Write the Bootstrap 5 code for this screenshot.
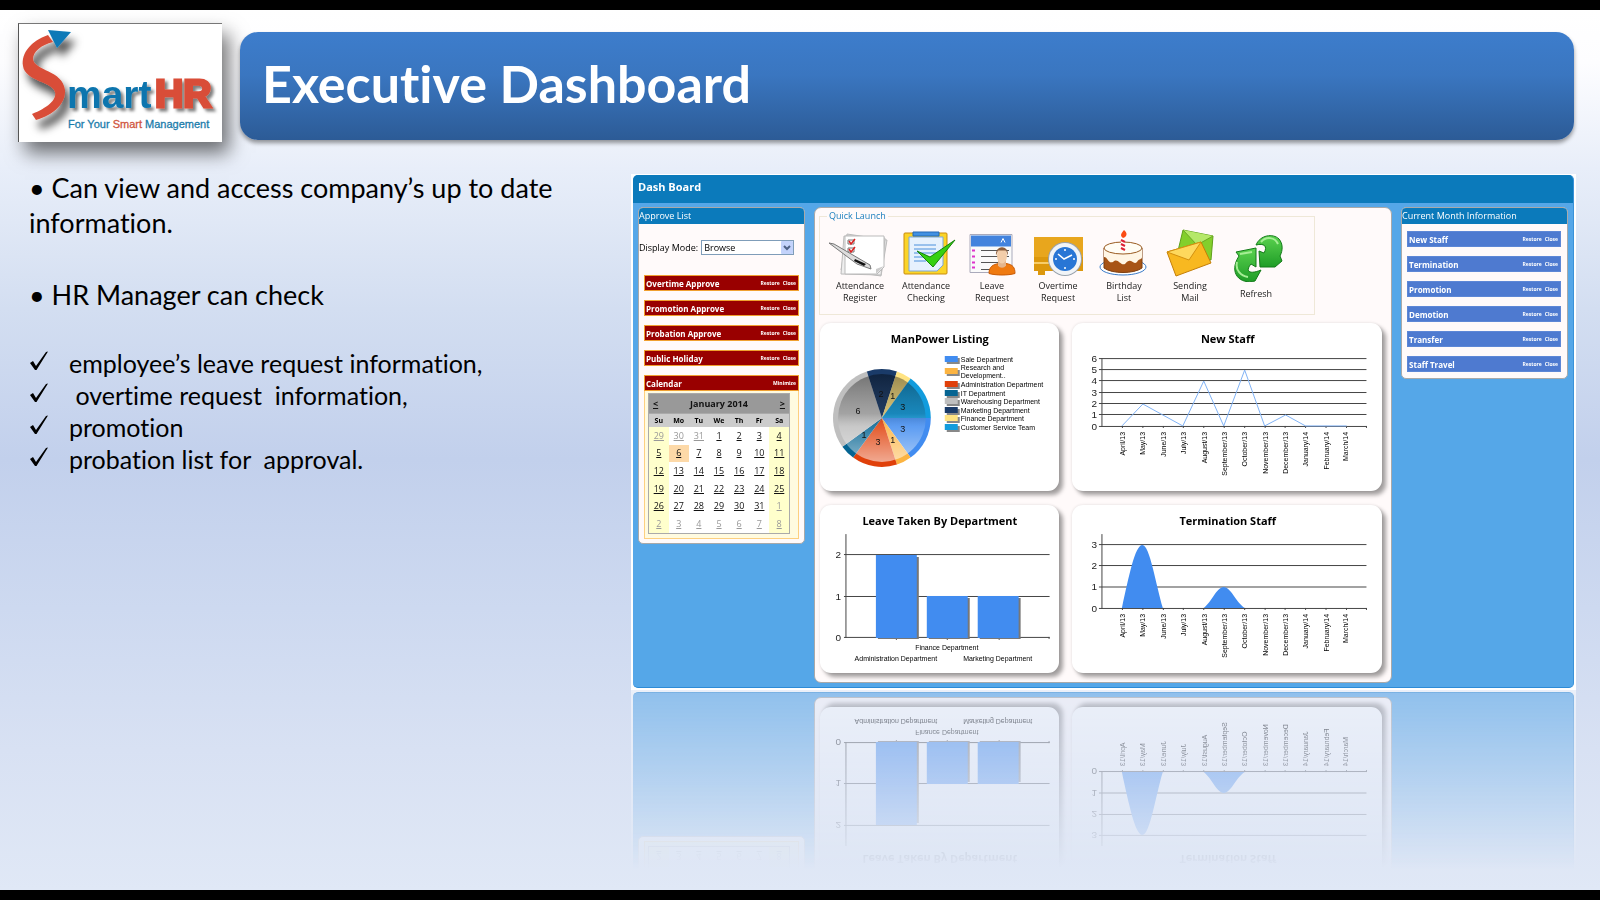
<!DOCTYPE html>
<html lang="en">
<head>
<meta charset="utf-8">
<meta name="viewport" content="width=device-width, initial-scale=1">
<title>SmartHR - Executive Dashboard</title>
<link rel="stylesheet" href="https://cdn.jsdelivr.net/npm/bootstrap@5.3.0/dist/css/bootstrap.min.css">
<style>
body{background:#000;font-family:"Open Sans","Noto Sans",sans-serif;color:#000}
.slide{min-height:100vh;border-top:10px solid #000;border-bottom:10px solid #000;overflow:hidden;
 background:linear-gradient(#fff 0,#fdfdff 6%,#e8eef9 18%,#d3def1 34%,#c2d0ec 51%,#cdd9f0 68%,#d8e1f3 84%,#e0e8f6 100%)}
.top-bar{padding:13px 26px 0 18px;gap:18px}
.logo-box{width:204px;height:119px;background:#fff;border-top:1px solid #777;border-left:1px solid #555;box-shadow:7px 11px 18px rgba(0,0,0,.55)}
.banner{height:108px;margin-top:9px;border-radius:18px;padding:0 22px;background:linear-gradient(#3d7dcc,#3a76c0 40%,#2c5b96);box-shadow:0 3px 4px rgba(0,0,0,.4)}
.banner h1{font:700 52px/60px Lato,sans-serif;font-variant-ligatures:none;color:#fff;margin:0;padding-bottom:6px}
.main-area{padding:28px 24px 0 29px}
.notes{width:602px;font:400 27px/35px Lato,sans-serif;font-variant-ligatures:none}
.notes p{margin:0 0 37px;padding-right:20px}
.notes ul{font-size:25px;line-height:32px;margin-top:-2px}
.notes li{gap:19px;white-space:pre}
.notes svg{width:21px;height:20px;margin-top:4px}
.board{background:#fff;padding:1px 2px 2px;margin-top:4px;-webkit-box-reflect:below 0 linear-gradient(transparent calc(100% - 180px),rgba(255,255,255,.54))}
.board-in{border-radius:5px;background:#55a7e8;border-bottom:1px solid #2d8bd6;border-right:1px solid #3b92d8;overflow:hidden}
.board-title{background:#0b7abb;color:#fff;font-size:11px;font-weight:700;line-height:24px;height:28px;margin:0;padding-left:5px}
.cols{padding:4px 5px 4px 5px;gap:9px}
.side{width:167px;border:1px solid #a9a9a9;border-radius:5px;background:#fffafa;overflow:hidden}
.side h3{background:#0b7abb;color:#fff;font-size:9px;line-height:16px;height:16px;margin:0;font-weight:400}
.center{border:1px solid #a9a9a9;border-radius:7px;background:#fffafa;padding:2px 9px 9px 4px}
.mode{font-size:9px;line-height:15px;padding-top:16px;height:51px;white-space:nowrap;gap:3px}
.mode select{width:93px;height:15px;font:9px/12px "Open Sans",sans-serif;padding:0 2px;border:1px solid #7f9db9;border-radius:0;color:#000;appearance:none;
 background:#fff url("data:image/svg+xml,%3Csvg xmlns='http://www.w3.org/2000/svg' width='12' height='13'%3E%3Crect width='12' height='13' rx='1' fill='%23c3d3fb'/%3E%3Cpath d='M3 5l3 3 3-3' fill='none' stroke='%234d6185' stroke-width='2'/%3E%3C/svg%3E") no-repeat right center}
.stack{padding:0 5px 4px;gap:9px}
.bar{height:16px;font-size:8px;font-weight:700;color:#fff;padding:0 2px 0 1px}
.bar h4{font-size:inherit;font-weight:inherit;line-height:inherit;margin:0}
.bar span{display:flex;gap:3px}
.bar a{font-size:5px;font-weight:700;color:#fff;text-decoration:none}
.red-bar{background:#900;border:1px solid #f0a030;line-height:15px}
.blue-bar{background:#4e7ad0;border:1px solid #5d87d6;line-height:15px}
.right-side .stack{padding:7px 6px 6px 5px}
.cal-box{border:1px solid #fdd080;border-top:0;background:#fffbe0;padding:2px 8px 4px 3px;margin-top:-9px}
.cal{width:100%;height:121px;border:1px solid #aaa;table-layout:fixed;background:#fff;text-align:center;font-size:9px;line-height:14px;border-collapse:collapse}
.cal td,.cal th{padding:0}
.cal a{color:#111}
.cal .mut a{color:#999}
.cal caption{caption-side:top;padding:0 4px;height:20px;background:#999;color:#111;font-size:9px;font-weight:700;line-height:20px;border:1px solid #aaa;border-bottom:0}
.cal thead{background:#ccc;font-size:7px;line-height:13px}
.cal tbody td:first-child,.cal tbody td:last-child{background:#ffffcc}
.cal tbody td.today{background:#fdd9a8}
.launch{width:496px;height:109px}
.launch fieldset{border:1px solid #efe8d8;height:105px;padding:0 7px}
.launch legend{float:none;width:auto;color:#1b7fbe;font-size:9px;line-height:12px;margin:0;padding:0 2px}
.tool{width:66px;font-size:9px;line-height:12px;border:0;background:none;padding:6px 0 0;color:#222;text-align:center;flex:none}
.tool svg{display:block;width:66px;height:50px;margin-bottom:2px}
.charts{display:grid;grid-template-columns:239fr 311fr;gap:14px 13px;padding:4px 0 0 1px}
.chart-card{height:168px;background:#fff;border-radius:11px;box-shadow:4px 4px 4px rgba(0,0,0,.36),0 0 3px rgba(0,0,0,.12)}
.chart-card svg{display:block;width:100%;height:168px}
.ttl{font:700 11px "Open Sans",sans-serif;text-anchor:middle}
.num{font:10px "Liberation Sans",sans-serif;text-anchor:end;fill:#222}
.val{font:9px "Liberation Sans",sans-serif;text-anchor:middle;fill:#111}
.tiny{font:7px "Liberation Sans",sans-serif;fill:#000}
.mid{text-anchor:middle}.end{text-anchor:end}
.axis{stroke:#444;fill:none}
.logo-bold{font:700 39px "Liberation Sans",sans-serif}
.logo-tag{font:11px "Liberation Sans",sans-serif}
</style>
</head>
<body>
<div class="slide">
<header class="top-bar d-flex align-items-start">
 <div class="logo-box flex-shrink-0">
  <svg viewBox="0 0 203 118" width="203" height="118" role="img" aria-label="SmartHR logo">
   <defs><filter id="sh" x="-30%" y="-30%" width="170%" height="170%"><feDropShadow dx="5" dy="9" stdDeviation="4" flood-opacity=".7"/></filter>
   <filter id="s2" x="-10%" y="-10%" width="130%" height="130%"><feDropShadow dx="3" dy="3" stdDeviation="1.5" flood-opacity=".5"/></filter></defs>
   <g filter="url(#sh)"><path d="M29 11C12 17 2 29 4 42c2 15 30 16 32 26 2 8-8 16-23 22l4 6c18-5 30-17 29-30C44 46 15 47 14 35c0-7 8-14 20-17z" fill="#d94e38"/><path d="M29 6l23 2-14 16z" fill="#0b79b7"/></g>
   <g filter="url(#s2)"><text class="logo-bold" x="48" y="84" fill="#0b75ae">mart</text>
   <text class="logo-bold" x="136" y="83" fill="#d94e38" stroke="#d94e38" stroke-width="3">HR</text></g>
   <text class="logo-tag" x="49" y="104" fill="#1b7cab" stroke="#1b7cab" stroke-width=".3">For Your <tspan fill="#d0563f" stroke="#d0563f">Smart</tspan> Management</text>
  </svg>
 </div>
 <div class="banner flex-grow-1 d-flex align-items-center"><h1>Executive Dashboard</h1></div>
</header>
<main class="main-area d-flex align-items-start">
 <section class="notes flex-shrink-0">
  <p>• Can view and access company’s up to date information.</p>
  <p>• HR Manager can check</p>
  <ul class="list-unstyled mb-0">
   <li class="d-flex"><svg viewBox="0 0 21 20"><path d="M1 12l3-2 3 5L17 1l2-.5L7.500 19H6z"/></svg><span>employee’s leave request information,</span></li>
   <li class="d-flex"><svg viewBox="0 0 21 20"><path d="M1 12l3-2 3 5L17 1l2-.5L7.500 19H6z"/></svg><span> overtime request  information,</span></li>
   <li class="d-flex"><svg viewBox="0 0 21 20"><path d="M1 12l3-2 3 5L17 1l2-.5L7.500 19H6z"/></svg><span>promotion</span></li>
   <li class="d-flex"><svg viewBox="0 0 21 20"><path d="M1 12l3-2 3 5L17 1l2-.5L7.500 19H6z"/></svg><span>probation list for  approval.</span></li>
  </ul>
 </section>
 <section class="board flex-grow-1"><div class="board-in">
  <h2 class="board-title">Dash Board</h2>
  <div class="cols d-flex align-items-start">
   <aside class="side flex-shrink-0">
    <h3>Approve List</h3>
    <div class="mode d-flex align-items-start"><label for="mode">Display Mode:</label><select id="mode"><option>Browse</option></select></div>
    <div class="stack d-flex flex-column">
     <div class="bar red-bar d-flex justify-content-between"><h4>Overtime Approve</h4><span><a href="#">Restore</a><a href="#">Close</a></span></div>
     <div class="bar red-bar d-flex justify-content-between"><h4>Promotion Approve</h4><span><a href="#">Restore</a><a href="#">Close</a></span></div>
     <div class="bar red-bar d-flex justify-content-between"><h4>Probation Approve</h4><span><a href="#">Restore</a><a href="#">Close</a></span></div>
     <div class="bar red-bar d-flex justify-content-between"><h4>Public Holiday</h4><span><a href="#">Restore</a><a href="#">Close</a></span></div>
     <div class="bar red-bar d-flex justify-content-between"><h4>Calendar</h4><span><a href="#">Minimize</a></span></div>
     <div class="cal-box">
      <table class="cal">
       <caption><div class="d-flex justify-content-between"><a href="#">&lt;</a><span>January 2014</span><a href="#">&gt;</a></div></caption>
       <thead><tr><th>Su</th><th>Mo</th><th>Tu</th><th>We</th><th>Th</th><th>Fr</th><th>Sa</th></tr></thead>
       <tbody>
       <tr><td class="mut"><a href="#">29</a></td><td class="mut"><a href="#">30</a></td><td class="mut"><a href="#">31</a></td><td><a href="#">1</a></td><td><a href="#">2</a></td><td><a href="#">3</a></td><td><a href="#">4</a></td></tr>
       <tr><td><a href="#">5</a></td><td class="today"><a href="#">6</a></td><td><a href="#">7</a></td><td><a href="#">8</a></td><td><a href="#">9</a></td><td><a href="#">10</a></td><td><a href="#">11</a></td></tr>
       <tr><td><a href="#">12</a></td><td><a href="#">13</a></td><td><a href="#">14</a></td><td><a href="#">15</a></td><td><a href="#">16</a></td><td><a href="#">17</a></td><td><a href="#">18</a></td></tr>
       <tr><td><a href="#">19</a></td><td><a href="#">20</a></td><td><a href="#">21</a></td><td><a href="#">22</a></td><td><a href="#">23</a></td><td><a href="#">24</a></td><td><a href="#">25</a></td></tr>
       <tr><td><a href="#">26</a></td><td><a href="#">27</a></td><td><a href="#">28</a></td><td><a href="#">29</a></td><td><a href="#">30</a></td><td><a href="#">31</a></td><td class="mut"><a href="#">1</a></td></tr>
       <tr class="mut"><td><a href="#">2</a></td><td><a href="#">3</a></td><td><a href="#">4</a></td><td><a href="#">5</a></td><td><a href="#">6</a></td><td><a href="#">7</a></td><td><a href="#">8</a></td></tr>
       </tbody>
      </table>
     </div>
    </div>
   </aside>
   <div class="center flex-grow-1">
    <div class="launch"><fieldset><legend>Quick Launch</legend>
     <div class="d-flex">
      <button class="tool" type="button"><svg viewBox="0 0 66 50"><g stroke="#bbb"><path d="M20 6l40 6-6 36-40-6z" fill="#ddd"/><path d="M17 8l41 2-4 37-40-1z" fill="#eee"/><path d="M18 8h39v31l-7 7H18z" fill="#fff"/></g><path d="M57 38l-8 8 0-5z" fill="#ccc"/><path d="M21 12h6v4h-6zM21 20h6v4h-6z" fill="#fff" stroke="#777"/><path d="M22 13l2 3 4-5M22 21l2 3 4-5" fill="none" stroke="#d22" stroke-width="1.500"/><path d="M2 15l5 1 36 21 1 4-14-5z" fill="#ddd" stroke="#777"/><path d="M28 31l11 5-2 2-10-5z" fill="#111"/></svg>Attendance<br>Register</button>
      <button class="tool" type="button"><svg viewBox="0 0 66 48"><rect x="11" y="4" width="43" height="41" rx="1" fill="#fbd428" stroke="#c98b0c"/><path d="M16 8h34v28l-6 6H16z" fill="#e6f1fd" stroke="#7aa7d8"/><path d="M21 16h22M21 20h22M21 24h22M21 28h15M21 32h12" stroke="#4a90dc"/><path d="M20 3h26v4H20z" fill="#4291e2" stroke="#2368b5"/><path d="M24 22l13 6L62 11 40 38z" fill="#36d010" stroke="#16830b"/></svg>Attendance<br>Checking</button>
      <button class="tool" type="button"><svg viewBox="0 0 66 47"><path d="M11 5h42v38H11z" fill="#fafafa" stroke="#aab"/><path d="M12 6h40v11H12z" fill="#4383dd"/><path d="M42 13l2-4 2 4" fill="none" stroke="#fff"/><path d="M22 21h28M22 27h28M22 33h25M22 40h12" stroke="#555"/><path d="M13 20h3v2h-3zM13 26h3v2h-3zM13 32h3v2h-3zM13 37h3v2h-3z" fill="#d3c"/><path d="M30 44c0-7 4-9 10-10l3 2 4-2c7 1 9 4 9 10-7 2-19 2-26 0z" fill="#ef7a10" stroke="#c95a05"/><path d="M39 30h8v6c-2 3-6 3-8 0z" fill="#e4b58c"/><ellipse cx="43" cy="26" rx="5" ry="8" fill="#f2cda9"/><path d="M37 26c-1-11 13-11 12 0l-2-5-8 0z" fill="#8c5e3c"/></svg>Leave<br>Request</button>
      <button class="tool" type="button"><svg viewBox="0 0 66 48"><path d="M9 8h49v34H20v4h-7v-4H9z" fill="#dc980d"/><path d="M9 8h49v20H9z" fill="#e8a61d"/><path d="M9 34h35" stroke="#f7cd69" stroke-width="2"/><circle cx="40" cy="30" r="17" fill="#9aa3ad"/><circle cx="40" cy="30" r="16" fill="#f1f4f7"/><circle cx="40" cy="30" r="12" fill="#2876d5"/><path d="M33 25l6 5 8-4M40 20v2M40 38v2M30 30h2M48 30h2" stroke="#fff" stroke-width="1.500" fill="none"/></svg>Overtime<br>Request</button>
      <button class="tool" type="button"><svg viewBox="0 0 66 48"><ellipse cx="32" cy="38" rx="23" ry="8" fill="#fff" stroke="#397ac7"/><path d="M13 19v20c8 6 30 6 38 0V19z" fill="#a75416" stroke="#7f3e0e"/><path d="M13 19v9c4 0 4 7 9 5 5-5 7 4 12 2 6-8 8 2 12-2 2-4 5-2 5-5v-9z" fill="#fff6e5"/><ellipse cx="32" cy="19" rx="19" ry="6" fill="#fffdf5" stroke="#9a5c22"/><path d="M30 9h4v12h-4z" fill="#fff"/><path d="M30 11l4 2M30 15l4 2M30 19l4 2" stroke="#d23" stroke-width="2"/><path d="M32 9c-4-3-1-5 1-8 4 3 3 7-1 8z" fill="#fb4b14"/></svg>Birthday<br>List</button>
      <button class="tool" type="button"><svg viewBox="0 0 66 48"><path d="M26 1l30 6-2 24-34-5z" fill="#83cf2c" stroke="#5fa01b"/><path d="M26 1l14 15L56 7" fill="#b5e869" stroke="#69a823"/><path d="M10 23l34-10 10 21-35 13z" fill="#f8b820" stroke="#c47e08"/><path d="M10 23l22 8L44 13z" fill="#fed85d" stroke="#d29010"/></svg>Sending<br>Mail</button>
      <button class="tool" type="button"><svg viewBox="0 0 66 50"><defs><linearGradient id="gr" x2="0" y2="1"><stop stop-color="#5bd24f"/><stop offset="1" stop-color="#1f9d27"/></linearGradient></defs><g fill="url(#gr)" stroke="#137a18" stroke-linejoin="round"><path d="M13 20l20-4v19l-5-3c-6 7-2 11 10 6l-6 11c-15 4-27-8-16-25z"/><path d="M33 13C37 3 50 1 56 7c4 5 4 11 1 17l2 5-7 6H37l-1-16 5 2c4-7 0-10-8-8z"/></g><path d="M38 10c5-6 14-5 17 2M14 30c-2 8 4 14 11 15M17 22l12-2" stroke="#a6ee95" stroke-width="2" fill="none"/></svg><span class="d-block pt-1">Refresh</span></button>
     </div></fieldset></div>
    <div class="charts">
     <div class="chart-card"><svg viewBox="0 0 239 168"><defs><linearGradient id="gl" x2="0" y2="1"><stop stop-color="#000" stop-opacity=".4"/><stop offset=".45" stop-color="#333" stop-opacity=".2"/><stop offset=".6" stop-color="#fff" stop-opacity=".15"/><stop offset="1" stop-color="#fff" stop-opacity=".55"/></linearGradient></defs>
      <text class="ttl" x="120" y="20">ManPower Listing</text>
      <path fill="#418cf0" d="M62 95h49A49 49 0 0 1 90.800 134.600z"/><path fill="#fcb441" d="M62 95L90.800 134.600A49 49 0 0 1 77.100 141.600z"/><path fill="#e0400a" d="M62 95L77.100 141.600A49 49 0 0 1 33.200 134.600z"/><path fill="#056492" d="M62 95L33.200 134.600A49 49 0 0 1 22.400 123.800z"/><path fill="#bfbfbf" d="M62 95L22.400 123.800A49 49 0 0 1 46.900 48.400z"/><path fill="#1a3b69" d="M62 95L46.900 48.400A49 49 0 0 1 77.100 48.400z"/><path fill="#ffe382" d="M62 95L77.100 48.400A49 49 0 0 1 90.800 55.400z"/><path fill="#129cdd" d="M62 95L90.800 55.400A49 49 0 0 1 111 95z"/><circle cx="62" cy="95" r="44" fill="url(#gl)"/>
      <g class="val"><text x="83" y="109">3</text><text x="73" y="120">1</text><text x="58" y="122">3</text><text x="44" y="115">1</text><text x="38" y="91">6</text><text x="61" y="74">2</text><text x="73" y="76">1</text><text x="83" y="87">3</text></g>
      <path fill="#888" d="M127 35h13v6h-13zM127 47h13v6h-13zM127 60h13v6h-13zM127 69h13v6h-13zM127 77h13v6h-13zM127 86h13v6h-13zM127 94h13v6h-13zM127 103h13v6h-13z"/>
      <path fill="#418cf0" d="M125 33h13v6h-13z"/><path fill="#fcb441" d="M125 45h13v6h-13z"/><path fill="#e0400a" d="M125 58h13v6h-13z"/><path fill="#056492" d="M125 67h13v6h-13z"/><path fill="#bfbfbf" d="M125 75h13v6h-13z"/><path fill="#1a3b69" d="M125 84h13v6h-13z"/><path fill="#ffe382" d="M125 92h13v6h-13z"/><path fill="#129cdd" d="M125 101h13v6h-13z"/>
      <g class="tiny"><text x="141" y="39">Sale Department</text><text x="141" y="47">Research and</text><text x="141" y="55">Development..</text><text x="141" y="64">Administration Department</text><text x="141" y="73">IT Department</text><text x="141" y="81">Warehousing  Department</text><text x="141" y="90">Marketing Department</text><text x="141" y="98">Finance Department</text><text x="141" y="107">Customer Service Team</text></g></svg></div>
     <div class="chart-card"><svg viewBox="0 0 311 168"><text class="ttl" x="156" y="20">New Staff</text>
      <path class="axis" d="M30 35v69M27 35.500h268M27 46.500h268M27 57.500h268M27 69.500h268M27 80.500h268M27 91.500h268M27 103.500h268M50.500 103v2M71 103v2M91.500 103v2M111.500 103v2M132 103v2M152.500 103v2M173 103v2M193.500 103v2M213.500 103v2M234 103v2M254.500 103v2M275 103v2M295 103v2"/>
      <path d="M50 103L71 81 91 92 111 103 132 58 152 103 173 47 193 103 214 92 234 103H275" fill="none" stroke="#7fb2f5"/>
      <g class="num"><text x="25" y="39">6</text><text x="25" y="50">5</text><text x="25" y="61">4</text><text x="25" y="73">3</text><text x="25" y="84">2</text><text x="25" y="95">1</text><text x="25" y="107">0</text></g>
      <g class="tiny end"><text transform="translate(53 109) rotate(-90)">April/13</text><text transform="translate(73 109) rotate(-90)">May/13</text><text transform="translate(94 109) rotate(-90)">June/13</text><text transform="translate(114 109) rotate(-90)">July/13</text><text transform="translate(135 109) rotate(-90)">August/13</text><text transform="translate(155 109) rotate(-90)">September/13</text><text transform="translate(175 109) rotate(-90)">October/13</text><text transform="translate(196 109) rotate(-90)">November/13</text><text transform="translate(216 109) rotate(-90)">December/13</text><text transform="translate(236 109) rotate(-90)">January/14</text><text transform="translate(257 109) rotate(-90)">February/14</text><text transform="translate(277 109) rotate(-90)">March/14</text></g></svg></div>
     <div class="chart-card"><svg viewBox="0 0 239 168"><text class="ttl" x="120" y="20">Leave Taken By Department</text>
      <path class="axis" d="M26 29v104M24 49.500h206M24 91.500h206M24 132.500h206M76.500 132v3M127.500 132v3M179.500 132v3M229.500 132v2"/>
      <path d="M58 52h41v82H58zM109 93h41v41h-41zM160 93h41v41h-41z" fill="#777"/><path d="M56 50h41v83H56zM107 91h41v42h-41zM158 91h41v42h-41z" fill="#418cf0"/>
      <g class="num"><text x="21" y="53">2</text><text x="21" y="95">1</text><text x="21" y="136">0</text></g>
      <g class="tiny mid"><text x="127" y="145">Finance Department</text><text x="76" y="156">Administration Department</text><text x="178" y="156">Marketing Department</text></g></svg></div>
     <div class="chart-card"><svg viewBox="0 0 311 168"><text class="ttl" x="156" y="20">Termination Staff</text>
      <path class="axis" d="M30 29v75M27 39.500h268M27 60.500h268M27 82h268M27 103.500h268M50.500 103v2M71 103v2M91.500 103v2M111.500 103v2M132 103v2M152.500 103v2M173 103v2M193.500 103v2M213.500 103v2M234 103v2M254.500 103v2M275 103v2M295 103v2"/>
      <path d="M50 103C57 72 63 40 70.500 40S84 80 91 103zM132 103C140 97 145 82 152 82S164 97 173 103z" fill="#418cf0"/>
      <g class="num"><text x="25" y="43">3</text><text x="25" y="64">2</text><text x="25" y="85">1</text><text x="25" y="107">0</text></g>
      <g class="tiny end"><text transform="translate(53 109) rotate(-90)">April/13</text><text transform="translate(73 109) rotate(-90)">May/13</text><text transform="translate(94 109) rotate(-90)">June/13</text><text transform="translate(114 109) rotate(-90)">July/13</text><text transform="translate(135 109) rotate(-90)">August/13</text><text transform="translate(155 109) rotate(-90)">September/13</text><text transform="translate(175 109) rotate(-90)">October/13</text><text transform="translate(196 109) rotate(-90)">November/13</text><text transform="translate(216 109) rotate(-90)">December/13</text><text transform="translate(236 109) rotate(-90)">January/14</text><text transform="translate(257 109) rotate(-90)">February/14</text><text transform="translate(277 109) rotate(-90)">March/14</text></g></svg></div>
    </div>
   </div>
   <aside class="side right-side flex-shrink-0">
    <h3>Current Month Information</h3>
    <div class="stack d-flex flex-column">
     <div class="bar blue-bar d-flex justify-content-between"><h4>New Staff</h4><span><a href="#">Restore</a><a href="#">Close</a></span></div>
     <div class="bar blue-bar d-flex justify-content-between"><h4>Termination</h4><span><a href="#">Restore</a><a href="#">Close</a></span></div>
     <div class="bar blue-bar d-flex justify-content-between"><h4>Promotion</h4><span><a href="#">Restore</a><a href="#">Close</a></span></div>
     <div class="bar blue-bar d-flex justify-content-between"><h4>Demotion</h4><span><a href="#">Restore</a><a href="#">Close</a></span></div>
     <div class="bar blue-bar d-flex justify-content-between"><h4>Transfer</h4><span><a href="#">Restore</a><a href="#">Close</a></span></div>
     <div class="bar blue-bar d-flex justify-content-between"><h4>Staff Travel</h4><span><a href="#">Restore</a><a href="#">Close</a></span></div>
    </div>
   </aside>
  </div>
 </div></section>
</main>
</div>
<script src="https://cdn.jsdelivr.net/npm/bootstrap@5.3.0/dist/js/bootstrap.bundle.min.js"></script>
</body>
</html>
